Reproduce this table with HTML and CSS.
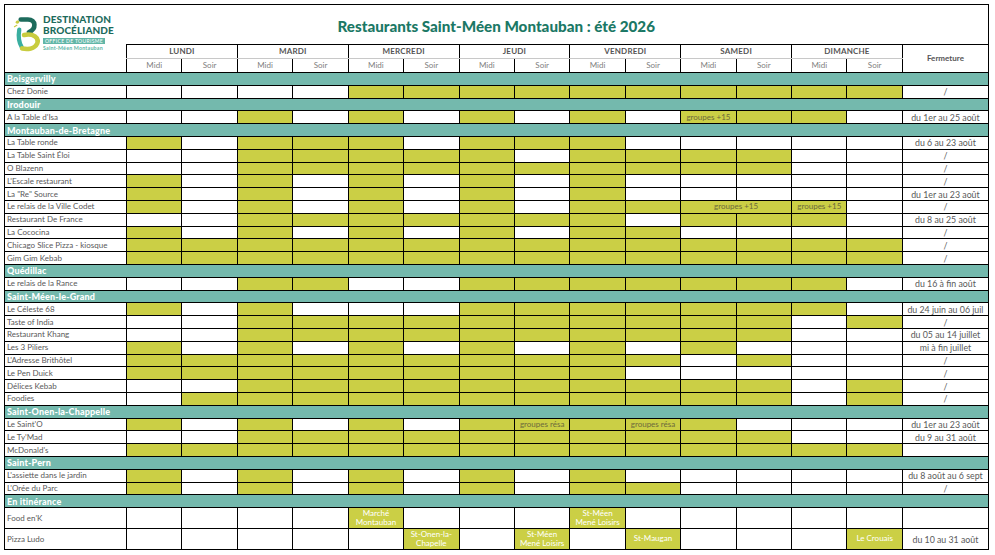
FILE: index.html
```html
<!DOCTYPE html>
<html lang="fr">
<head>
<meta charset="utf-8">
<title>Restaurants Saint-Méen Montauban : été 2026</title>
<link rel="stylesheet" href="styles.css">
</head>
<body>
<table class="grid">
<colgroup>
<col class="c-name">
<col class="c-slot"><col class="c-slot"><col class="c-slot"><col class="c-slot"><col class="c-slot"><col class="c-slot"><col class="c-slot">
<col class="c-slot"><col class="c-slot"><col class="c-slot"><col class="c-slot"><col class="c-slot"><col class="c-slot"><col class="c-slot">
<col class="c-ferm">
</colgroup>
<thead>
<tr class="h-title">
<td class="logo-cell" rowspan="3">
<div class="logo">
<svg class="logo-icon" viewBox="0 0 28 38" width="27" height="37" aria-hidden="true">
<path d="M2.5 7.5 C3.5 5 6 5 6.5 7 C6 9 4 9.5 2.5 7.5 Z" fill="#c8cc3f"/>
<path d="M1.5 12 L4 10.5" stroke="#c8cc3f" stroke-width="1.2" stroke-linecap="round"/>
<path d="M6.5 15 C5.5 21 6 28 9 33" stroke="#3aaea0" stroke-width="4.4" fill="none" stroke-linecap="round"/>
<path d="M8 4.5 H15.5 C24 4.5 24.5 14.5 16.5 17.5" stroke="#1d6b5c" stroke-width="4.8" fill="none" stroke-linecap="round"/>
<path d="M11.5 20.5 C21 18.5 27.5 23.5 25 29.5 C22.5 35 15 35.5 9.5 34.5" stroke="#c8cc3f" stroke-width="4.8" fill="none" stroke-linecap="round"/>
</svg>
<div class="logo-text">
<div class="logo-big">DESTINATION</div>
<div class="logo-big">BROCÉLIANDE</div>
<div class="logo-box">OFFICE DE TOURISME</div>
<div class="logo-small">Saint-Méen Montauban</div>
</div>
</div>
</td>
<td class="title" colspan="15">Restaurants Saint-Méen Montauban : été 2026</td>
</tr>
<tr class="h-days">
<th class="day" colspan="2">LUNDI</th>
<th class="day" colspan="2">MARDI</th>
<th class="day" colspan="2">MERCREDI</th>
<th class="day" colspan="2">JEUDI</th>
<th class="day" colspan="2">VENDREDI</th>
<th class="day" colspan="2">SAMEDI</th>
<th class="day" colspan="2">DIMANCHE</th>
<th class="ferm-h" rowspan="2">Fermeture</th>
</tr>
<tr class="h-slots">
<th class="slot">Midi</th><th class="slot">Soir</th>
<th class="slot">Midi</th><th class="slot">Soir</th>
<th class="slot">Midi</th><th class="slot">Soir</th>
<th class="slot">Midi</th><th class="slot">Soir</th>
<th class="slot">Midi</th><th class="slot">Soir</th>
<th class="slot">Midi</th><th class="slot">Soir</th>
<th class="slot">Midi</th><th class="slot">Soir</th>
</tr>
</thead>
<tbody>
<tr class="grp"><td colspan="16">Boisgervilly</td></tr>
<tr class="r"><td class="n">Chez Donie</td><td></td><td></td><td></td><td></td><td class="y"></td><td class="y"></td><td class="y"></td><td class="y"></td><td class="y"></td><td class="y"></td><td class="y"></td><td class="y"></td><td class="y"></td><td class="y"></td><td class="f">/</td></tr>

<tr class="grp"><td colspan="16">Irodouir</td></tr>
<tr class="r"><td class="n">A la Table d'Isa</td><td></td><td></td><td class="y"></td><td></td><td class="y"></td><td></td><td class="y"></td><td></td><td class="y"></td><td></td><td class="y">groupes +15</td><td class="y"></td><td class="y"></td><td></td><td class="f">du 1er au 25 août</td></tr>

<tr class="grp"><td colspan="16">Montauban-de-Bretagne</td></tr>
<tr class="r"><td class="n">La Table ronde</td><td class="y"></td><td></td><td class="y"></td><td class="y"></td><td class="y"></td><td></td><td class="y"></td><td class="y"></td><td class="y"></td><td></td><td></td><td></td><td></td><td></td><td class="f">du 6 au 23 août</td></tr>
<tr class="r"><td class="n">La Table Saint Éloi</td><td></td><td></td><td class="y"></td><td class="y"></td><td class="y"></td><td class="y"></td><td class="y"></td><td></td><td class="y"></td><td class="y"></td><td class="y"></td><td class="y"></td><td></td><td></td><td class="f">/</td></tr>
<tr class="r"><td class="n">O Blazenn</td><td></td><td></td><td class="y"></td><td class="y"></td><td class="y"></td><td class="y"></td><td class="y"></td><td class="y"></td><td class="y"></td><td class="y"></td><td class="y"></td><td class="y"></td><td></td><td></td><td class="f">/</td></tr>
<tr class="r"><td class="n">L'Escale restaurant</td><td class="y"></td><td></td><td class="y"></td><td></td><td class="y"></td><td></td><td class="y"></td><td></td><td class="y"></td><td></td><td></td><td></td><td></td><td></td><td class="f">/</td></tr>
<tr class="r"><td class="n">La "Re" Source</td><td class="y"></td><td></td><td class="y"></td><td></td><td class="y"></td><td></td><td class="y"></td><td></td><td class="y"></td><td></td><td></td><td></td><td></td><td></td><td class="f">du 1er au 23 août</td></tr>
<tr class="r"><td class="n">Le relais de la Ville Codet</td><td class="y"></td><td></td><td class="y"></td><td></td><td class="y"></td><td></td><td class="y"></td><td></td><td class="y"></td><td class="y"></td><td class="y" colspan="2">groupes +15</td><td class="y">groupes +15</td><td></td><td class="f">/</td></tr>
<tr class="r"><td class="n">Restaurant De France</td><td></td><td></td><td class="y"></td><td class="y"></td><td class="y"></td><td class="y"></td><td class="y"></td><td class="y"></td><td class="y"></td><td></td><td class="y"></td><td class="y"></td><td class="y"></td><td></td><td class="f">du 8 au 25 août</td></tr>
<tr class="r"><td class="n">La Cococina</td><td class="y"></td><td></td><td class="y"></td><td></td><td class="y"></td><td></td><td class="y"></td><td></td><td class="y"></td><td class="y"></td><td></td><td></td><td></td><td></td><td class="f">/</td></tr>
<tr class="r"><td class="n">Chicago Slice Pizza - kiosque</td><td class="y"></td><td class="y"></td><td class="y"></td><td class="y"></td><td class="y"></td><td class="y"></td><td class="y"></td><td class="y"></td><td class="y"></td><td class="y"></td><td class="y"></td><td class="y"></td><td class="y"></td><td class="y"></td><td class="f">/</td></tr>
<tr class="r"><td class="n">Gim Gim Kebab</td><td class="y"></td><td class="y"></td><td class="y"></td><td class="y"></td><td class="y"></td><td class="y"></td><td class="y"></td><td class="y"></td><td class="y"></td><td class="y"></td><td class="y"></td><td class="y"></td><td class="y"></td><td class="y"></td><td class="f">/</td></tr>

<tr class="grp"><td colspan="16">Quédillac</td></tr>
<tr class="r"><td class="n">Le relais de la Rance</td><td></td><td></td><td class="y"></td><td class="y"></td><td></td><td></td><td class="y"></td><td class="y"></td><td class="y"></td><td class="y"></td><td class="y"></td><td class="y"></td><td class="y"></td><td></td><td class="f">du 16 à fin août</td></tr>

<tr class="grp"><td colspan="16">Saint-Méen-le-Grand</td></tr>
<tr class="r"><td class="n">Le Céleste 68</td><td class="y"></td><td></td><td class="y"></td><td></td><td></td><td></td><td class="y"></td><td class="y"></td><td class="y"></td><td class="y"></td><td class="y"></td><td class="y"></td><td class="y"></td><td></td><td class="f">du 24 juin au 06 juil</td></tr>
<tr class="r"><td class="n">Taste of India</td><td></td><td></td><td class="y"></td><td class="y"></td><td class="y"></td><td class="y"></td><td class="y"></td><td class="y"></td><td class="y"></td><td class="y"></td><td class="y"></td><td class="y"></td><td></td><td class="y"></td><td class="f">/</td></tr>
<tr class="r"><td class="n">Restaurant Khang</td><td></td><td></td><td class="y"></td><td class="y"></td><td class="y"></td><td class="y"></td><td class="y"></td><td class="y"></td><td class="y"></td><td class="y"></td><td class="y"></td><td class="y"></td><td></td><td></td><td class="f">du 05 au 14 juillet</td></tr>
<tr class="r"><td class="n">Les 3 Piliers</td><td class="y"></td><td></td><td class="y"></td><td></td><td class="y"></td><td></td><td class="y"></td><td></td><td class="y"></td><td></td><td class="y"></td><td></td><td></td><td></td><td class="f">mi à fin juillet</td></tr>
<tr class="r"><td class="n">L'Adresse Brithôtel</td><td class="y"></td><td class="y"></td><td class="y"></td><td class="y"></td><td class="y"></td><td class="y"></td><td class="y"></td><td class="y"></td><td class="y"></td><td class="y"></td><td></td><td class="y"></td><td></td><td></td><td class="f">/</td></tr>
<tr class="r"><td class="n">Le Pen Duick</td><td class="y"></td><td class="y"></td><td class="y"></td><td class="y"></td><td class="y"></td><td class="y"></td><td class="y"></td><td class="y"></td><td class="y"></td><td></td><td></td><td></td><td></td><td></td><td class="f">/</td></tr>
<tr class="r"><td class="n">Délices Kebab</td><td></td><td></td><td class="y"></td><td class="y"></td><td class="y"></td><td class="y"></td><td class="y"></td><td class="y"></td><td class="y"></td><td class="y"></td><td class="y"></td><td class="y"></td><td></td><td class="y"></td><td class="f">/</td></tr>
<tr class="r"><td class="n">Foodies</td><td></td><td class="y"></td><td class="y"></td><td class="y"></td><td class="y"></td><td class="y"></td><td class="y"></td><td class="y"></td><td class="y"></td><td class="y"></td><td class="y"></td><td class="y"></td><td></td><td class="y"></td><td class="f">/</td></tr>

<tr class="grp"><td colspan="16">Saint-Onen-la-Chappelle</td></tr>
<tr class="r"><td class="n">Le Saint'O</td><td class="y"></td><td></td><td class="y"></td><td></td><td class="y"></td><td></td><td class="y"></td><td class="y">groupes résa</td><td class="y"></td><td class="y">groupes résa</td><td class="y"></td><td></td><td></td><td></td><td class="f">du 1er au 23 août</td></tr>
<tr class="r"><td class="n">Le Ty'Mad</td><td></td><td></td><td class="y"></td><td class="y"></td><td class="y"></td><td class="y"></td><td class="y"></td><td class="y"></td><td class="y"></td><td class="y"></td><td class="y"></td><td class="y"></td><td></td><td></td><td class="f">du 9 au 31 août</td></tr>
<tr class="r"><td class="n">McDonald's</td><td class="y"></td><td class="y"></td><td class="y"></td><td class="y"></td><td class="y"></td><td class="y"></td><td class="y"></td><td class="y"></td><td class="y"></td><td class="y"></td><td class="y"></td><td class="y"></td><td class="y"></td><td class="y"></td><td class="f"></td></tr>

<tr class="grp"><td colspan="16">Saint-Pern</td></tr>
<tr class="r"><td class="n">L'assiette dans le jardin</td><td class="y"></td><td></td><td class="y"></td><td></td><td class="y"></td><td></td><td class="y"></td><td></td><td class="y"></td><td></td><td></td><td></td><td></td><td></td><td class="f">du 8 août au 6 sept</td></tr>
<tr class="r"><td class="n">L'Orée du Parc</td><td class="y"></td><td></td><td class="y"></td><td></td><td class="y"></td><td></td><td class="y"></td><td></td><td class="y"></td><td class="y"></td><td></td><td></td><td></td><td></td><td class="f">/</td></tr>

<tr class="grp"><td colspan="16">En itinérance</td></tr>
<tr class="r2"><td class="n">Food en'K</td><td></td><td></td><td></td><td></td><td class="y w">Marché<br>Montauban</td><td></td><td></td><td></td><td class="y w">St-Méen<br>Mené Loisirs</td><td></td><td></td><td></td><td></td><td></td><td class="f"></td></tr>
<tr class="r2"><td class="n">Pizza Ludo</td><td></td><td></td><td></td><td></td><td></td><td class="y w">St-Onen-la-<br>Chapelle</td><td></td><td class="y w">St-Méen<br>Mené Loisirs</td><td></td><td class="y w">St-Maugan</td><td></td><td></td><td></td><td class="y w">Le Crouais</td><td class="f">du 10 au 31 août</td></tr>
</tbody>
</table>
</body>
</html>
```
FILE: styles.css
```css
html, body {
  margin: 0;
  padding: 0;
  background: #ffffff;
}
body {
  padding: 4px 0 0 4px;
  font-family: Lato, "Open Sans", "Liberation Sans", sans-serif;
  color: #555555;
}
.grid {
  border-collapse: collapse;
  table-layout: fixed;
  width: 984px;
}
.c-name { width: 122px; }
.c-slot { width: 55.43px; }
.c-ferm { width: 86px; }

.grid td, .grid th {
  border: 1px solid #000000;
  padding: 0;
  font-size: 8px;
  line-height: 9px;
  text-align: center;
  vertical-align: middle;
  white-space: nowrap;
  overflow: hidden;
}

/* header */
.h-title { height: 40px; }
.h-days { height: 14px; }
.h-slots { height: 14px; }

.grid .logo-cell {
  border-right: none;
  vertical-align: top;
  text-align: left;
}
.logo {
  display: flex;
  align-items: flex-start;
  gap: 3px;
  padding: 8px 0 0 8px;
}
.logo-icon { display: block; flex: none; margin-top: 2px; }
.logo-text {
  display: flex;
  flex-direction: column;
  padding-top: 1px;
}
.logo-big {
  font-family: Lato, "Liberation Sans", sans-serif;
  font-weight: 900;
  font-size: 10px;
  line-height: 11px;
  color: #1d6b5c;
  letter-spacing: 0.1px;
}
.logo-box {
  margin-top: 1.5px;
  background: #62b6a7;
  color: #ffffff;
  font-size: 5px;
  line-height: 6px;
  padding: 0 2px;
  letter-spacing: 0.35px;
  width: max-content;
}
.logo-small {
  margin-top: 1px;
  font-size: 5.3px;
  line-height: 6px;
  color: #62b6a7;
  font-weight: 700;
  letter-spacing: 0.2px;
}

.grid .title {
  border-left: none;
  font-family: Lato, "Liberation Sans", sans-serif;
  font-weight: 900;
  font-size: 15.2px;
  line-height: 18px;
  color: #1b7865;
  padding-right: 122px;
  padding-top: 2px;
}
.grid .day {
  border-bottom: 1px solid #c8c8c8;
  font-weight: 700;
  color: #555555;
  letter-spacing: 0.2px;
}
.grid .slot {
  border-top: 1px solid #c8c8c8;
  font-weight: 400;
  color: #808080;
}
.grid .ferm-h {
  font-weight: 700;
  color: #555555;
}

/* body rows */
.r, .grp { height: 12.8px; }
.r2 { height: 21px; }

.grp td {
  background: #74b9ad;
  color: #ffffff;
  font-weight: 900;
  font-size: 9px;
  letter-spacing: 0.15px;
  text-align: left;
  padding-left: 2px;
}
.grid .n {
  text-align: left;
  padding-left: 2px;
  color: #595959;
}
.grid .y {
  background: #cbcf45;
  color: #6b6a3c;
}
.grid .w {
  color: #ffffff;
  line-height: 9.5px;
}
.grid .f {
  color: #595959;
  font-size: 8.8px;
}
```
